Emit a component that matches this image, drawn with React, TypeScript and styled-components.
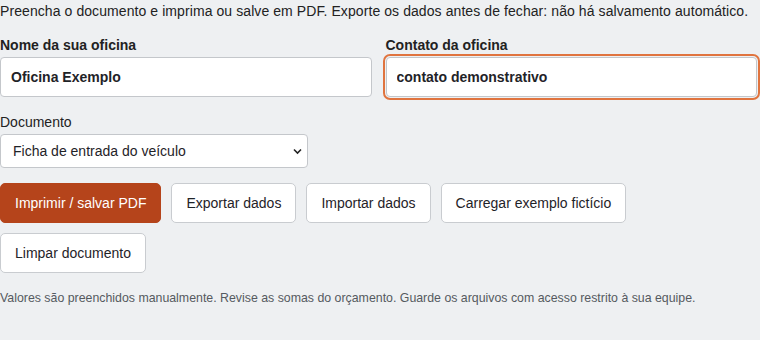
import { createGlobalStyle } from "styled-components";
import styled from "styled-components";

const GlobalStyle = createGlobalStyle`
  * { box-sizing: border-box; }
  html, body {
    margin: 0;
    padding: 0;
    background: #eef0f2;
    font-family: "Liberation Sans", Arial, sans-serif;
    color: #1f2328;
  }
`;

const Page = styled.main`
  width: 757px;
  padding-top: 3px;
`;

const Intro = styled.p`
  margin: 0 0 17px;
  font-size: 14px;
  line-height: 17px;
  letter-spacing: 0.08px;
  color: #222;
`;

const FieldGrid = styled.div`
  display: grid;
  grid-template-columns: 1fr 1fr;
  gap: 14px;
  margin-bottom: 17px;
`;

const Field = styled.label`
  display: flex;
  flex-direction: column;
  gap: 4px;
`;

const FieldTitle = styled.span<{ $bold?: boolean }>`
  font-size: 14px;
  line-height: 16px;
  font-weight: ${(p) => (p.$bold ? 700 : 400)};
  color: #222;
`;

const TextInput = styled.input`
  height: 40px;
  padding: 0 10px;
  border: 1px solid #c4c7cb;
  border-radius: 4px;
  background: #fff;
  font-family: inherit;
  font-size: 14px;
  font-weight: 700;
  color: #1f2328;

  &:focus,
  &[data-focus="true"] {
    outline: 2px solid #e0743f;
    outline-offset: 1px;
  }
`;

const SelectField = styled(Field)`
  width: 308px;
  margin-bottom: 15px;
`;

const SelectBox = styled.div`
  position: relative;
  display: flex;
  align-items: center;
  height: 34px;
  padding: 0 24px 0 12px;
  border: 1px solid #c4c7cb;
  border-radius: 4px;
  background: #fff;
`;

const Select = styled.select`
  appearance: none;
  width: 100%;
  height: 100%;
  padding: 0;
  margin: 0;
  border: none;
  outline: none;
  background: transparent;
  font-family: inherit;
  font-size: 14px;
  color: #1f2328;
`;

const Chevron = styled.svg`
  position: absolute;
  right: 5px;
  top: 13px;
  pointer-events: none;
`;

const Actions = styled.div`
  display: flex;
  flex-wrap: wrap;
  gap: 10px;
  width: 640px;
  margin-bottom: 18px;
`;

const Button = styled.button<{ $primary?: boolean }>`
  height: 40px;
  padding: 0 14px;
  border-radius: 5px;
  border: 1px solid ${(p) => (p.$primary ? "#b5441b" : "#c9ccd0")};
  background: ${(p) => (p.$primary ? "#b5441b" : "#fff")};
  color: ${(p) => (p.$primary ? "#fff" : "#1f2328")};
  font-family: inherit;
  font-size: 14px;
  cursor: pointer;
`;

const Note = styled.p`
  margin: 0;
  font-size: 12.35px;
  line-height: 15px;
  color: #555a60;
`;

export default function App() {
  return (
    <>
      <GlobalStyle />
      <Page>
        <Intro>
          Preencha o documento e imprima ou salve em PDF. Exporte os dados antes de fechar: não
          há salvamento automático.
        </Intro>
        <FieldGrid>
          <Field>
            <FieldTitle $bold>Nome da sua oficina</FieldTitle>
            <TextInput defaultValue="Oficina Exemplo" />
          </Field>
          <Field>
            <FieldTitle $bold>Contato da oficina</FieldTitle>
            <TextInput defaultValue="contato demonstrativo" data-focus="true" />
          </Field>
        </FieldGrid>
        <SelectField>
          <FieldTitle>Documento</FieldTitle>
          <SelectBox>
            <Select defaultValue="entrada">
              <option value="entrada">Ficha de entrada do veículo</option>
              <option value="orcamento">Orçamento</option>
            </Select>
            <Chevron width="9" height="7" viewBox="0 0 9 7" aria-hidden="true">
              <path d="M1 1.5 L4.5 5 L8 1.5" fill="none" stroke="#222" strokeWidth="1.6" />
            </Chevron>
          </SelectBox>
        </SelectField>
        <Actions>
          <Button $primary>Imprimir / salvar PDF</Button>
          <Button>Exportar dados</Button>
          <Button>Importar dados</Button>
          <Button>Carregar exemplo fictício</Button>
          <Button>Limpar documento</Button>
        </Actions>
        <Note>
          Valores são preenchidos manualmente. Revise as somas do orçamento. Guarde os arquivos com
          acesso restrito à sua equipe.
        </Note>
      </Page>
    </>
  );
}
